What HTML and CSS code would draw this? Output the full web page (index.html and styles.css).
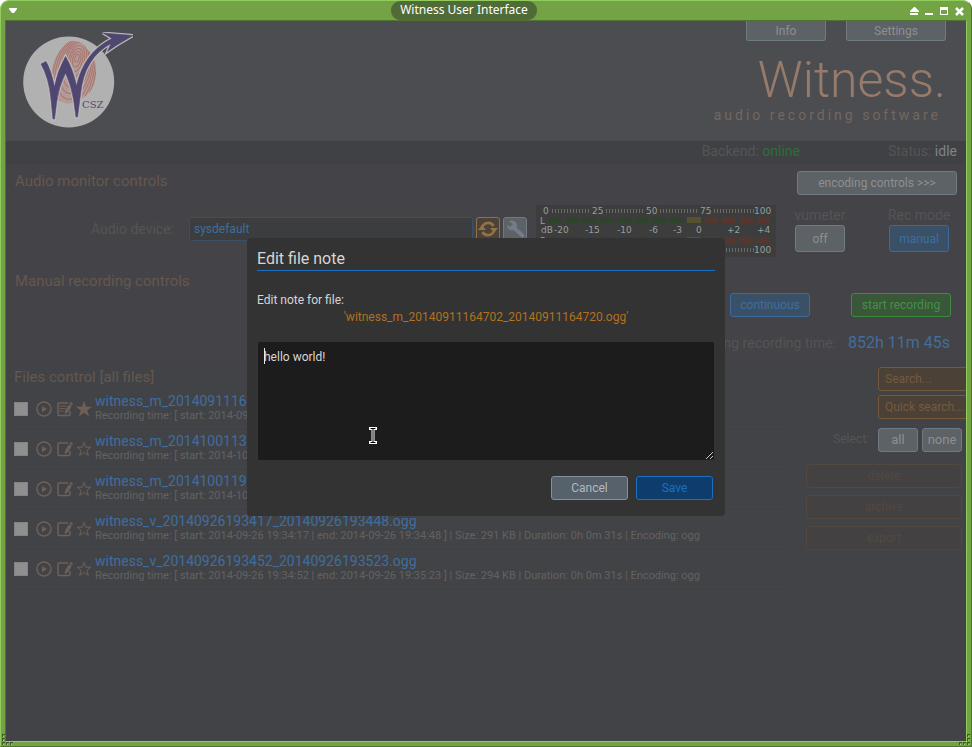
FILE: index.html
```html
<!DOCTYPE html>
<html lang="en">
<head>
<meta charset="utf-8">
<title>Witness User Interface</title>
<link rel="stylesheet" href="styles.css">
</head>
<body>
<svg class="sprite" width="0" height="0" aria-hidden="true">
  <defs>
    <symbol id="play" viewBox="0 0 16 16"><circle cx="8" cy="8" r="7" fill="none" stroke="currentColor" stroke-width="1.5"/><path d="M6 5l5 3-5 3z" fill="currentColor"/></symbol>
    <symbol id="edit" viewBox="0 0 16 16"><path d="M11 2H2Q1 2 1 3V13.500Q1 14.500 2 14.500H12Q13 14.500 13 13.500V10" fill="none" stroke="currentColor" stroke-width="1.500"/><path d="M13.500 1l2.500 1.500-1 2-2.600-1.600zM12 3.500l2.600 1.700-3.400 5.800-3.600 2.200.6-3.900z" fill="currentColor"/></symbol>
    <symbol id="note" viewBox="0 0 16 16"><use href="#edit"/><path d="M2.500 5h7M2.500 7.500h6M2.500 10h4" stroke="currentColor" stroke-width="1.200"/></symbol>
    <symbol id="star" viewBox="0 0 16 16"><path d="M8 1.500l1.700 4.700H15l-4.200 3.200 1.600 5.100L8 11.400l-4.400 3.100 1.600-5.100L1 6.200H6.300z" fill="none" stroke="currentColor"/></symbol>
    <symbol id="star-full" viewBox="0 0 16 16"><path d="M8 0l2 5.700h6l-4.700 3.600L13 15.200 8 11.700l-5 3.500 1.700-5.900L0 5.700h6z" fill="currentColor"/></symbol>
    <pattern id="ticks" width="3" height="4" patternUnits="userSpaceOnUse"><path d="M1.500 0v4" stroke="#6a6b69" stroke-width="1"/></pattern>
    <clipPath id="print"><path d="M70 41Q82 40 87 49Q95 56 96 68Q97 82 90 92Q82 100 72 103Q62 105 56 97Q50 84 52 70Q56 50 70 41z"/></clipPath>
    <path id="mark" d="M41 64L46 61.500Q51 70 54.500 87Q57 72 65.500 56.500Q73 69 76.500 86Q84 52 112 38.500L103 33L133 35.500L117 45L107.500 51.500L111 43.500Q84 58 80.500 94L77.500 117H76L73.500 99Q71 85 65.500 73Q58.500 87 56.500 103L54.500 119H53L51 99Q49 78 41 64z"/>
  </defs>
</svg>

<div class="window">
  <div class="titlebar">
    <button class="wm-button" aria-label="Window menu"><svg width="9" height="5" viewBox="0 0 9 5"><path d="M0 0h8v1L5 5h-2L0 1z" fill="#fff"/></svg></button>
    <div class="title-area"><span class="title-pill">Witness User Interface</span></div>
    <div class="wm-buttons">
      <button class="wm-button" aria-label="Shade"><svg width="9" height="9" viewBox="0 0 9 9"><path d="M4 0h1l4 4v1H0V4zM0 6h8v2H0z" fill="#fff"/></svg></button>
      <button class="wm-button" aria-label="Minimize"><svg width="9" height="9" viewBox="0 0 9 9"><path d="M0 6h8v2H0z" fill="#fff"/></svg></button>
      <button class="wm-button" aria-label="Maximize"><svg width="9" height="9" viewBox="0 0 9 9"><path d="M0 0h8v8H0zM1 3v4h6V3z" fill="#fff" fill-rule="evenodd"/></svg></button>
      <button class="wm-button" aria-label="Close"><svg width="9" height="9" viewBox="0 0 9 9"><path d="M1 1l7 7M8 1l-7 7" stroke="#fff" stroke-width="2.500"/></svg></button>
    </div>
  </div>

  <div class="frame">
    <div class="app">
      <header class="header">
        <svg class="logo" width="112" height="98" viewBox="21 32 112 98" role="img" aria-label="CSZ Witness logo">
          <circle cx="68.700" cy="82" r="45.500" fill="#b1b1b1"/>
          <g clip-path="url(#print)" fill="none" stroke="#a9746e" stroke-width="1">
            <path d="M50 40h50v66H50z" fill="#b39a96" stroke="none"/>
            <g transform="rotate(14 75 66)"><ellipse cx="75" cy="58" rx="2" ry="4"/><ellipse cx="75" cy="59" rx="4" ry="8"/><ellipse cx="75" cy="60" rx="6" ry="12"/><ellipse cx="75" cy="61" rx="8" ry="16"/><ellipse cx="75" cy="62" rx="10" ry="20"/><ellipse cx="75" cy="64" rx="12" ry="24"/><ellipse cx="75" cy="66" rx="14" ry="28"/><ellipse cx="75" cy="68" rx="16" ry="32"/><ellipse cx="75" cy="70" rx="18" ry="36"/><ellipse cx="75" cy="72" rx="20" ry="40"/><ellipse cx="75" cy="74" rx="22" ry="44"/><ellipse cx="75" cy="76" rx="24" ry="48"/></g>
          </g>
          <use href="#mark" fill="none" stroke="#bdbcbd" stroke-width="3"/>
          <use href="#mark" fill="#504770" stroke="#504770" stroke-width=".6"/>
          <text x="82" y="108" class="logo-text">CSZ</text>
        </svg>
        <div class="brand">
          <nav class="tabs"><button class="btn tab tab-info">Info</button><button class="btn tab tab-settings">Settings</button></nav>
          <h1 class="brand-name">Witness.</h1>
          <p class="tagline">audio recording software</p>
        </div>
      </header>

      <div class="status"><span>Backend: <b class="online">online</b></span><span>Status: <b class="idle">idle</b></span></div>

      <section class="controls">
        <div class="section-head"><h2>Audio monitor controls</h2><button class="btn btn-wide">encoding controls &gt;&gt;&gt;</button></div>
        <div class="monitor">
          <div class="device">
            <label for="device">Audio device:</label>
            <select id="device"><option>sysdefault</option></select>
            <button class="btn icon-btn amber" aria-label="Refresh devices"><svg width="20" height="20" viewBox="0 0 20 20"><path d="M4 8.500A6.300 6.300 0 0 1 15.500 7M16 11.500A6.300 6.300 0 0 1 4.500 13" fill="none" stroke="currentColor" stroke-width="2.600"/><path d="M12 9h8l-4 5zM0 11h8L4 6z" fill="currentColor"/></svg></button>
            <button class="btn icon-btn" aria-label="Device settings"><svg width="20" height="20" viewBox="0 0 20 20"><path d="M8 8l9.500 8.500" stroke="#757b8a" stroke-width="4" stroke-linecap="round"/><path d="M4 2.500A5 5 0 1 1 2 6l3 2 3-3z" fill="#757b8a"/></svg></button>
          </div>
          <svg class="meter" width="240" height="52" viewBox="0 0 240 52" role="img" aria-label="Volume meter">
            <path d="M0 0h240v52H0z" fill="#3c3d3c"/>
            <path d="M15 4h40v4H15zM69 4h40v4H69zM123 4h40v4h-40zM178 4h40v4h-40zM15 43h40v4H15zM69 43h40v4H69zM123 43h40v4h-40zM178 43h40v4h-40z" fill="url(#ticks)"/>
            <path d="M12 15H150M12 35H150" stroke="#30432f" stroke-width="6" stroke-dasharray="14 3.400"/>
            <path d="M151 12h14v6h-14zM151 32h14v6h-14z" fill="#55522f"/>
            <path d="M169 12h13v6h-13zM186 12h13v6h-13zM203 12h14v6h-14zM221 12h13v6h-13zM169 32h13v6h-13zM186 32h13v6h-13zM203 32h14v6h-14zM221 32h13v6h-13z" fill="#553730"/>
            <g class="scale"><text x="7" y="9">0</text><text x="56" y="9">25</text><text x="110" y="9">50</text><text x="164" y="9">75</text><text x="218" y="9">100</text><text x="4" y="19">L</text><text x="5" y="28">dB</text><text x="18" y="28">-20</text><text x="49" y="28">-15</text><text x="81" y="28">-10</text><text x="113" y="28">-6</text><text x="137" y="28">-3</text><text x="160" y="28">0</text><text x="191" y="28">+2</text><text x="221" y="28">+4</text><text x="4" y="39">R</text><text x="7" y="48">0</text><text x="56" y="48">25</text><text x="110" y="48">50</text><text x="164" y="48">75</text><text x="218" y="48">100</text></g>
          </svg>
          <div class="mode vu"><span>vumeter</span><button class="btn mode-btn">off</button></div>
          <div class="mode rec"><span>Rec mode</span><button class="btn blue mode-btn">manual</button></div>
        </div>
        <h2 class="manual-head">Manual recording controls</h2>
        <div class="record"><button class="btn blue continuous">continuous</button><button class="btn green start">start recording</button></div>
        <div class="remaining"><span>Remaining recording time:</span><strong>852h 11m 45s</strong></div>
      </section>

      <section class="files">
        <div class="list">
          <h2>Files control [all files]</h2>
          <ul>
            <li><input type="checkbox" aria-label="Select file 1"><button class="glyph" aria-label="Play"><svg><use href="#play"/></svg></button><button class="glyph" aria-label="Edit note"><svg><use href="#note"/></svg></button><button class="glyph star" aria-label="Unstar"><svg><use href="#star-full"/></svg></button><div><a href="#">witness_m_20140911164702_20140911164720.ogg</a><p>Recording time: [ start: 2014-09-11 16:47:02 | end: 2014-09-11 16:47:20 ] | Size: 171 KB | Duration: 0h 0m 18s | Encoding: ogg</p></div></li>
            <li><input type="checkbox" aria-label="Select file 2"><button class="glyph" aria-label="Play"><svg><use href="#play"/></svg></button><button class="glyph" aria-label="Edit note"><svg><use href="#edit"/></svg></button><button class="glyph star" aria-label="Star"><svg><use href="#star"/></svg></button><div><a href="#">witness_m_20141001131502_20141001131533.ogg</a><p>Recording time: [ start: 2014-10-01 13:15:02 | end: 2014-10-01 13:15:33 ] | Size: 290 KB | Duration: 0h 0m 31s | Encoding: ogg</p></div></li>
            <li><input type="checkbox" aria-label="Select file 3"><button class="glyph" aria-label="Play"><svg><use href="#play"/></svg></button><button class="glyph" aria-label="Edit note"><svg><use href="#edit"/></svg></button><button class="glyph star" aria-label="Star"><svg><use href="#star"/></svg></button><div><a href="#">witness_m_20141001192210_20141001192241.ogg</a><p>Recording time: [ start: 2014-10-01 19:22:10 | end: 2014-10-01 19:22:41 ] | Size: 292 KB | Duration: 0h 0m 31s | Encoding: ogg</p></div></li>
            <li><input type="checkbox" aria-label="Select file 4"><button class="glyph" aria-label="Play"><svg><use href="#play"/></svg></button><button class="glyph" aria-label="Edit note"><svg><use href="#edit"/></svg></button><button class="glyph star" aria-label="Star"><svg><use href="#star"/></svg></button><div><a href="#">witness_v_20140926193417_20140926193448.ogg</a><p>Recording time: [ start: 2014-09-26 19:34:17 | end: 2014-09-26 19:34:48 ] | Size: 291 KB | Duration: 0h 0m 31s | Encoding: ogg</p></div></li>
            <li><input type="checkbox" aria-label="Select file 5"><button class="glyph" aria-label="Play"><svg><use href="#play"/></svg></button><button class="glyph" aria-label="Edit note"><svg><use href="#edit"/></svg></button><button class="glyph star" aria-label="Star"><svg><use href="#star"/></svg></button><div><a href="#">witness_v_20140926193452_20140926193523.ogg</a><p>Recording time: [ start: 2014-09-26 19:34:52 | end: 2014-09-26 19:35:23 ] | Size: 294 KB | Duration: 0h 0m 31s | Encoding: ogg</p></div></li>
          </ul>
        </div>
        <aside class="actions">
          <button class="btn search">Search...</button>
          <button class="btn search">Quick search...</button>
          <div class="select-row"><span>Select:</span><button class="btn">all</button><button class="btn">none</button></div>
          <button class="btn faded">delete</button>
          <button class="btn faded">archive</button>
          <button class="btn faded">export</button>
        </aside>
      </section>
    </div>
  </div>
  <svg class="grip grip-left" width="11" height="11" viewBox="0 0 11 11" aria-hidden="true"><path d="M0 0h3v1H1v2H0zM0 4h3v1H1v2H0zM0 8h3v1H1v2H0zM4 8h3v1H5v2H4zM8 8h3v1H9v2H8z" fill="#3f5a27"/><path d="M1 2h1v1H1zM1 6h1v1H1zM1 10h1v1H1zM5 10h1v1H5zM9 10h1v1H9z" fill="#9fd66c"/></svg>
  <svg class="grip grip-right" width="11" height="11" viewBox="0 0 11 11" aria-hidden="true"><path d="M8 0h3v1H9v2H8zM8 4h3v1H9v2H8zM0 8h3v1H1v2H0zM4 8h3v1H5v2H4zM8 8h3v1H9v2H8z" fill="#3f5a27"/><path d="M9 2h1v1H9zM9 6h1v1H9zM1 10h1v1H1zM5 10h1v1H5zM9 10h1v1H9z" fill="#9fd66c"/></svg>

  <form class="dialog" role="dialog" aria-labelledby="dialog-title">
    <h2 id="dialog-title">Edit file note</h2>
    <label for="note-text">Edit note for file:<span class="filename">'witness_m_20140911164702_20140911164720.ogg'</span></label>
    <div class="note-box">
      <textarea id="note-text">hello world!</textarea>
      <span class="caret"></span>
      <svg class="ibeam" width="8" height="17" viewBox="0 0 8 17" aria-hidden="true"><path d="M1.500 1.500H6.500M4 2V15M1.500 15.500H6.500" stroke="#fff" stroke-width="3" stroke-linecap="square"/><path d="M1.500 1.500H6.500M4 2V15M1.500 15.500H6.500" stroke="#000" stroke-width="1"/></svg>
      <svg class="resize" width="7" height="7" viewBox="0 0 7 7" aria-hidden="true"><path d="M0 7L7 0M4 7l3-3" stroke="#c4c4c4"/></svg>
    </div>
    <div class="dialog-actions"><button type="button" class="btn cancel">Cancel</button><button type="button" class="btn save">Save</button></div>
  </form>
</div>
</body>
</html>
```

FILE: styles.css
```css
* { box-sizing: border-box; }
body { margin: 0; background: #fff; color: #555455; font: 14px/20px Roboto, "Liberation Sans", sans-serif; }
h1, h2, p, ul { margin: 0; padding: 0; font-weight: 400; }
button, select, textarea { margin: 0; font: inherit; color: inherit; }
svg { display: block; }
.sprite { position: absolute; }

.window { position: relative; display: flex; flex-direction: column; min-height: 100vh; }
.titlebar { display: flex; align-items: center; height: 20px; padding: 0 7px 0 8px; background: #74a345; border-top: 1px solid #91cd5d; border-left: 1px solid #91cd5d; border-right: 1px solid #4f7330; border-radius: 9px 9px 0 0; }
.wm-button { display: block; padding: 0; border: 0; background: none; }
.wm-buttons { display: flex; gap: 6px; padding-top: 1px; }
.title-area { flex: 1; text-align: center; }
.title-pill { display: inline-block; height: 19px; padding: 0 9px; border-radius: 9px; background: #506b37; color: #fff; font: 12px/18px "Noto Sans", sans-serif; vertical-align: top; }
.frame { flex: 1; display: flex; padding: 0 4px 4px; background: #74a345; border: 1px solid #4f7330; border-top: 0; border-left-color: #91cd5d; }
.app { flex: 1; display: flex; flex-direction: column; min-width: 0; overflow: hidden; border: 1px solid #91cd5d; border-top-color: #4f7330; border-left-color: #4f7330; background: #424347; }

.btn { height: 24px; padding: 0; border: 1px solid #6f7a82; border-radius: 3px; background: #5d6266; color: #8c9092; font-size: 12px; line-height: 20px; text-align: center; }
.blue { border-color: #3d6a9c; background: #3a5067; color: #3e6e9f; }
.green { border-color: #3d8d41; background: #3b5739; color: #429147; }

.header { display: flex; justify-content: space-between; height: 120px; background: #4c4d51; }
.logo { margin: 11px 0 0 15px; }
.logo-text { font: 10px "DejaVu Serif", serif; fill: #4d4a72; }
.brand { display: flex; flex-direction: column; align-items: flex-end; padding-right: 20px; }
.tabs { display: flex; gap: 20px; }
.tab { height: 20px; padding: 0; line-height: 18px; border-top: 0; border-radius: 0 0 3px 3px; }
.tab-info { width: 80px; }
.tab-settings { width: 100px; }
.brand-name { margin-top: 14px; color: #967a6a; font-size: 50px; font-weight: 300; line-height: 50px; }
.tagline { margin-right: 5px; color: #75675e; letter-spacing: 3px; }

.status { display: flex; justify-content: flex-end; gap: 88px; height: 23px; padding-right: 9px; background: #404145; }
.status b { font-weight: 400; }
.online { color: #2f6d38; }
.idle { color: #7a8589; }

.controls { padding: 7px 9px 0; background: #444347; height: 196px; }
.controls h2, .files h2 { color: #64584f; font-size: 15px; line-height: 20px; }
.section-head { display: flex; justify-content: space-between; }
.btn-wide { width: 160px; }
.monitor { display: flex; justify-content: flex-end; padding-top: 10px; }
.device { display: flex; align-items: flex-start; padding-top: 12px; }
.device label { margin-right: 15px; line-height: 24px; }
.device select { width: 284px; height: 24px; padding: 0 4px; appearance: none; border: 1px solid #3a5067; border-radius: 2px; background: #3c3d3f; color: #3e6e9f; font-size: 12px; }
.icon-btn { display: grid; place-items: center; width: 24px; margin-left: 3px; }
.amber { border-color: #927046; background: #4c4237; color: #927348; }
.meter { margin-left: 9px; }
.scale { fill: #94a09d; font: 9px "DejaVu Sans", sans-serif; }
.mode { display: flex; flex-direction: column; align-items: center; white-space: nowrap; }
.mode-btn { height: 27px; }
.vu { width: 50px; margin-left: 19px; }
.vu .btn { width: 50px; }
.rec { width: 60px; margin: 0 8px 0 44px; }
.rec .btn { width: 60px; }
.manual-head { margin-top: 14px; }
.record { display: flex; justify-content: flex-end; gap: 41px; padding-right: 6px; margin-top: 2px; }
.continuous { width: 80px; }
.start { width: 100px; }
.remaining { display: flex; justify-content: flex-end; align-items: baseline; gap: 12px; margin-top: 16px; padding-right: 7px; }
.remaining strong { color: #416e9e; font-size: 16px; font-weight: 400; }

.files { flex: 1; display: flex; justify-content: space-between; padding: 7px 4px 0 8px; }
.list { width: 770px; }
.files ul { list-style: none; }
.files li { display: flex; align-items: center; height: 40px; padding-top: 2px; border-bottom: 1px solid #454649; }
.files li input { appearance: none; width: 14px; height: 14px; margin: 2px 8px 0 0; background: #8f8f8f; border: 1px solid #838383; }
.glyph { padding: 0; margin: 2px 5px 0 0; border: 0; background: none; color: #6f6057; }
.glyph svg { width: 16px; height: 16px; }
.glyph.star { margin: 2px 3px 0 -2px; }
.files a { display: block; color: #3e6e9f; font-size: 14px; line-height: 16px; text-decoration: none; }
.files p { font-size: 11px; line-height: 14px; white-space: nowrap; color: #626261; }
.actions { display: flex; flex-direction: column; width: 156px; }
.search { width: 110px; margin: 0 0 4px 72px; padding-left: 6px; border-color: #77583a; background: #4b4137; color: #755a3f; text-align: left; }
.select-row { display: grid; grid-template-columns: 1fr 40px 40px; gap: 4px; margin: 5px 0 12px; font-size: 12px; line-height: 22px; }
.select-row span { padding-right: 5px; text-align: right; }
.select-row .btn { font-size: 13px; }
.faded { margin-bottom: 7px; border-color: #51483f; background: #444142; color: #51493f; }

.dialog { position: absolute; top: 238px; left: 50%; width: 478px; padding: 10px; transform: translateX(-50%); border-radius: 4px; background: #333; color: #d6d6d6; font-size: 12px; line-height: 17px; }
.dialog h2 { border-bottom: 1px solid #1b6fc3; font-size: 16px; line-height: 22px; }
.dialog label { display: block; margin-top: 21px; }
.filename { display: block; color: #b1711f; text-align: center; }
.note-box { position: relative; margin: 16px 1px; }
.dialog textarea { display: block; width: 100%; height: 118px; padding: 7px 6px; border: 0; border-radius: 2px; background: #1c1c1c; resize: none; outline: 0; }
.caret { position: absolute; top: 6px; left: 6px; width: 1px; height: 16px; background: #e8e8e8; }
.ibeam { position: absolute; top: 85px; left: 111px; }
.resize { position: absolute; right: 1px; bottom: 1px; }
.dialog-actions { display: flex; justify-content: flex-end; gap: 8px; padding: 0 2px 6px 0; }
.dialog .btn { width: 77px; height: 24px; }
.dialog .cancel { border-color: #84919c; background: #56616b; color: #b0bac1; }
.dialog .save { border-color: #1a6ec5; background: #0f3d6b; color: #1b6fc3; }

.grip { position: absolute; bottom: 2px; }
.grip-left { left: 2px; }
.grip-right { right: 2px; }
```
